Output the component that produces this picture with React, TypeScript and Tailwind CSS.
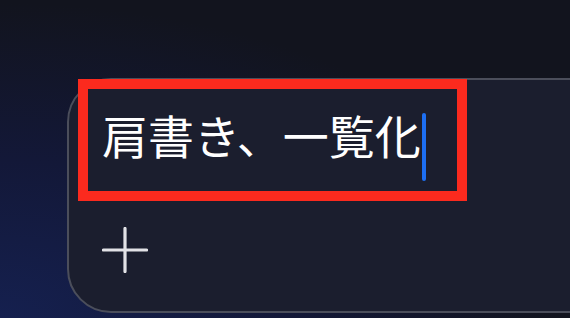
export default function App() {
    return (
        <div className="relative w-[570px] h-[318px] overflow-hidden bg-[#12141e] bg-[radial-gradient(ellipse_at_0%_100%,#15204f_0%,#131838_35%,#12141e_70%)] font-['Noto_Sans_CJK_JP','Noto_Sans',sans-serif]">
            <div className="pt-[78px] pl-[67px]">
                {/* input card */}
                <div className="w-[560px] h-[235px] rounded-l-[44px] border-2 border-[#4b4e5b] bg-[#1b1e2e] pl-[33px] pt-[31px]">
                    <div className="flex items-start">
                        <span className="text-[46px] leading-[46px] text-white whitespace-nowrap">肩書き、一覧化</span>
                        <span className="mt-[2px] ml-[1px] h-[68px] w-[4px] rounded-full bg-[#1d6ff3]" />
                    </div>
                    <button className="mt-[46px] block text-[#e2e2e6]">
                        <svg width="46" height="46" viewBox="0 0 46 46" fill="none" stroke="currentColor" strokeWidth="3.2" strokeLinecap="round">
                            <path d="M23 1.5v43M1.5 23h43" />
                        </svg>
                    </button>
                </div>
            </div>
            {/* red highlight overlay */}
            <div className="absolute left-[78px] top-[79px] w-[389px] h-[122px] border-[10px] border-[#fb2a1e]" />
        </div>
    )
}
